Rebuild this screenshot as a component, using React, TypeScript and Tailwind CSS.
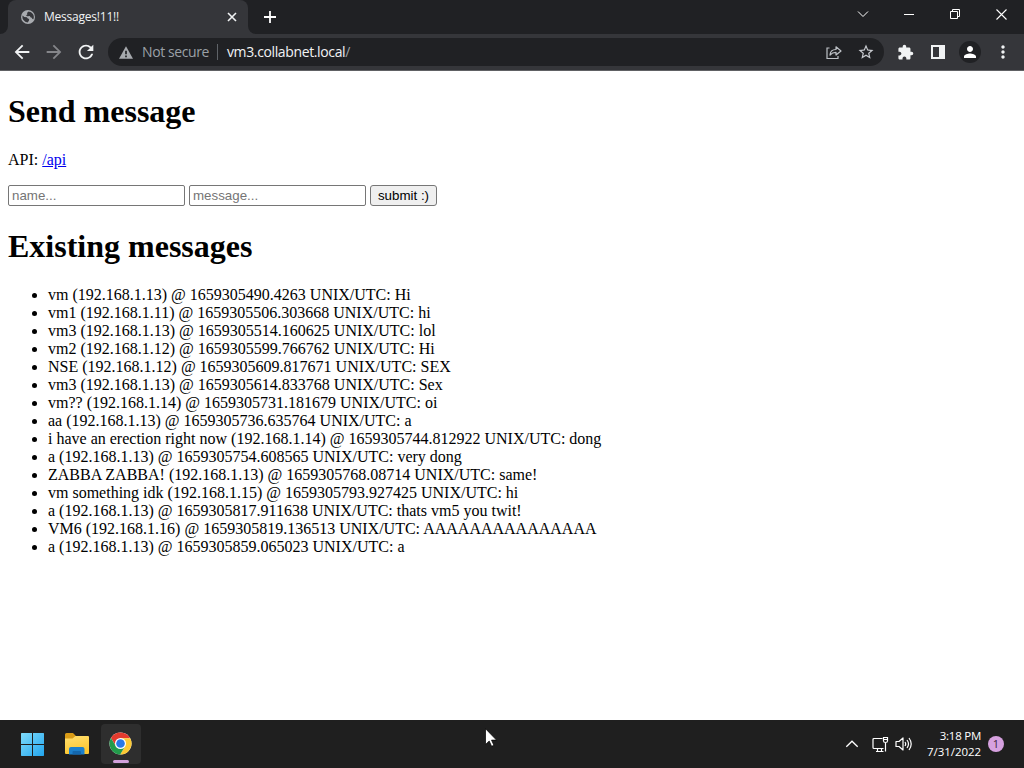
import React from "react";
import {
  MdArrowBack,
  MdArrowForward,
  MdExtension,
  MdMoreVert,
  MdPerson,
  MdRefresh,
  MdStarBorder,
} from "react-icons/md";

const messages = [
  "vm (192.168.1.13) @ 1659305490.4263 UNIX/UTC: Hi",
  "vm1 (192.168.1.11) @ 1659305506.303668 UNIX/UTC: hi",
  "vm3 (192.168.1.13) @ 1659305514.160625 UNIX/UTC: lol",
  "vm2 (192.168.1.12) @ 1659305599.766762 UNIX/UTC: Hi",
  "NSE (192.168.1.12) @ 1659305609.817671 UNIX/UTC: SEX",
  "vm3 (192.168.1.13) @ 1659305614.833768 UNIX/UTC: Sex",
  "vm?? (192.168.1.14) @ 1659305731.181679 UNIX/UTC: oi",
  "aa (192.168.1.13) @ 1659305736.635764 UNIX/UTC: a",
  "i have an erection right now (192.168.1.14) @ 1659305744.812922 UNIX/UTC: dong",
  "a (192.168.1.13) @ 1659305754.608565 UNIX/UTC: very dong",
  "ZABBA ZABBA! (192.168.1.13) @ 1659305768.08714 UNIX/UTC: same!",
  "vm something idk (192.168.1.15) @ 1659305793.927425 UNIX/UTC: hi",
  "a (192.168.1.13) @ 1659305817.911638 UNIX/UTC: thats vm5 you twit!",
  "VM6 (192.168.1.16) @ 1659305819.136513 UNIX/UTC: AAAAAAAAAAAAAAA",
  "a (192.168.1.13) @ 1659305859.065023 UNIX/UTC: a",
];

function GlobeIcon() {
  return (
    <svg width="14" height="14" viewBox="0 0 14 14">
      <circle cx="7" cy="7" r="7" fill="#a8abaf" />
      <path d="M1.600 5.400 3.300 7l2.500.3 1 1.300 1.400.5-.3 1.600-1.300 1.700A5.600 5.600 0 0 1 1.600 5.400Z" fill="#35363a" />
      <path d="M7.500 1.500 6 3l.4 1.200L5 5.400l1.300.9 2.400-.2 1.100 1.500 1 .2.600 1.300 1 .1A5.600 5.600 0 0 0 7.500 1.500Z" fill="#35363a" />
    </svg>
  );
}

function TabStrip() {
  return (
    <div className="flex h-[34px] bg-[#202124]">
      <div className="flex w-2 items-end bg-[#35363a]">
        <div className="h-full w-2 rounded-br-lg bg-[#202124]" />
      </div>
      <div className="flex w-60 items-center rounded-t-lg bg-[#35363a] pl-[13px] pr-[11px]">
        <GlobeIcon />
        <span className="ml-[9px] flex-1 whitespace-nowrap text-[12px] leading-4 tracking-[-0.22px] text-[#f1f3f4]">
          Messages!11!!
        </span>
        <svg width="10" height="10" viewBox="0 0 10 10" stroke="#f1f3f4" strokeWidth="1.6">
          <path d="m1 1 8 8M9 1 1 9" />
        </svg>
      </div>
      <div className="w-2 bg-[#35363a]">
        <div className="h-full rounded-bl-lg bg-[#202124]" />
      </div>
      <div className="flex flex-1 items-center pl-2">
        <svg width="12" height="12" viewBox="0 0 12 12" stroke="#fff" strokeWidth="1.8">
          <path d="M6 0v12M0 6h12" />
        </svg>
      </div>
      <div className="flex h-7 text-white">
        <div className="flex w-[46px] items-center justify-center">
          <svg width="12" height="8" viewBox="0 0 12 8" fill="none" stroke="currentColor" strokeWidth="1">
            <path d="m1 1.500 5 5 5-5" />
          </svg>
        </div>
        <div className="flex w-[46px] items-center justify-center">
          <div className="mt-px h-px w-2.5 bg-white" />
        </div>
        <div className="flex w-[46px] items-center justify-center">
          <svg width="10" height="10" viewBox="0 0 10 10" fill="none" stroke="currentColor">
            <path d="M.5 2.500h7v7h-7zM2.500 2.500v-2h7v7h-2" />
          </svg>
        </div>
        <div className="flex w-[46px] items-center justify-center">
          <svg width="11" height="11" viewBox="0 0 11 11" stroke="currentColor" strokeWidth="1.100">
            <path d="m.5.5 10 10M10.500.5l-10 10" />
          </svg>
        </div>
      </div>
    </div>
  );
}

function Toolbar() {
  return (
    <div className="flex h-9 items-center bg-[#35363a] pl-1.5 text-[#f1f3f4]">
      <div className="flex w-8 justify-center">
        <MdArrowBack size={22} />
      </div>
      <div className="flex w-8 justify-center text-[#85868a]">
        <MdArrowForward size={22} />
      </div>
      <div className="flex w-8 justify-center">
        <MdRefresh size={22} />
      </div>
      <div className="ml-1.5 flex h-7 w-[776px] items-center rounded-full bg-[#202124] pl-[11px] text-[14px]">
        <svg width="14" height="13" viewBox="0 0 14 13">
          <path d="M7 .3 14 12.700H0z" fill="#a6a9ad" />
          <path d="M7 4.700v3.600M7 9.500v1.800" stroke="#202124" strokeWidth="1.700" />
        </svg>
        <span className="mb-0.5 ml-[9px] w-[68px] whitespace-nowrap tracking-[-0.4px] text-[#9aa0a6]">Not secure</span>
        <span className="ml-[7px] h-4 w-px bg-[#5f6368]" />
        <span className="mb-0.5 ml-[9px] flex-1 whitespace-nowrap tracking-[-0.37px] text-[#f1f3f4]">
          vm3.collabnet.local<span className="text-[#9aa0a6]">/</span>
        </span>
        <svg width="16" height="16" viewBox="0 0 16 16" fill="none" stroke="#bdc1c6" strokeWidth="1.200">
          <path d="M3.500 4H1v10.500h11V12" />
          <path d="M4 11c.2-3.600 2.200-5.400 6-5.500V2.800L15 7l-5 4V8.400C7.500 8.400 5.600 9.200 4 11Z" strokeLinejoin="round" />
        </svg>
        <MdStarBorder size={18} className="ml-[15px] mr-[9px] text-[#c8cbd0]" />
      </div>
      <div className="ml-[5px] mr-px flex w-8 justify-center">
        <MdExtension size={17} />
      </div>
      <div className="flex w-8 justify-center">
        <svg width="14" height="14" viewBox="0 0 14 14">
          <path fill="currentColor" fillRule="evenodd" d="M0 0h14v14H0zM2 2v10h6V2z" />
        </svg>
      </div>
      <div className="flex w-8 justify-center">
        <div className="flex h-[22px] w-[22px] items-center justify-center rounded-full bg-[#202124] text-white">
          <MdPerson size={18} />
        </div>
      </div>
      <div className="flex w-[33px] justify-center">
        <MdMoreVert size={20} />
      </div>
    </div>
  );
}

function Page() {
  return (
    <main className="flex-1 overflow-hidden border-t border-[#606164] bg-white px-2 font-['Liberation_Serif',serif] text-[16px] leading-[18px] text-black">
      <h1 className="mt-[22px] text-[32px] font-bold leading-[37px]">Send message</h1>
      <p className="mt-[21px]">
        API:{" "}
        <a href="#api" className="text-[#0000ee] underline">
          /api
        </a>
      </p>
      <form className="mt-4 flex gap-1 font-['Liberation_Sans',sans-serif] text-[13.333px] leading-[15px]">
        <input
          placeholder="name..."
          className="h-[21px] w-[177px] rounded-[2px] border border-[#767676] px-[3px] placeholder:text-[#757575]"
        />
        <input
          placeholder="message..."
          className="h-[21px] w-[177px] rounded-[2px] border border-[#767676] px-[3px] placeholder:text-[#757575]"
        />
        <button type="button" className="h-[21px] w-[67px] rounded-[3px] border border-[#767676] bg-[#efefef] text-center">
          submit :)
        </button>
      </form>
      <h1 className="mt-[22px] text-[32px] font-bold leading-[37px]">Existing messages</h1>
      <ul className="mt-[21px] list-disc pl-10">
        {messages.map((m) => (
          <li key={m}>{m}</li>
        ))}
      </ul>
    </main>
  );
}

function WindowsIcon() {
  return (
    <svg width="24" height="24" viewBox="0 0 24 24">
      <defs>
        <linearGradient id="win" x1="0" y1="0" x2="1" y2="1">
          <stop offset="0" stopColor="#7fdcfb" />
          <stop offset="1" stopColor="#22a5ee" />
        </linearGradient>
      </defs>
      <path fill="url(#win)" d="M1.500 1H12v11H1V1.500zM13 1h10.500l.5.5V12H13zM1 13h11v11H1.500l-.5-.5zM13 13h11v10.500l-.5.5H13z" />
    </svg>
  );
}

function FolderIcon() {
  return (
    <svg width="24" height="22" viewBox="0 0 24 22">
      <defs>
        <linearGradient id="fold" x1="0" y1="0" x2="0.300" y2="1">
          <stop offset="0" stopColor="#ffdf70" />
          <stop offset="1" stopColor="#fdc72f" />
        </linearGradient>
      </defs>
      <path d="M0 1.500Q0 0 1.500 0H8l3 3h11v6H0z" fill="#d99b16" />
      <path d="M0 5.500h7.500L10.500 3H23q1 0 1 1v16q0 1-1 1H1q-1 0-1-1z" fill="url(#fold)" />
      <path d="M4 21.500V16q0-2 2-2h11.500q2 0 2 2v5.500z" fill="#1c80cc" />
      <path d="M7.500 21.500V19q0-1 1-1H15q1 0 1 1v2.500z" fill="#1467ad" />
    </svg>
  );
}

function ChromeIcon() {
  return (
    <svg width="23" height="23" viewBox="0 0 48 48">
      <circle cx="24" cy="24" r="23" fill="#fff" />
      <path d="M24 13h20.200A23 23 0 0 0 4.100 12.500l10.400 17z" fill="#e33b2e" />
      <path d="M33.500 29.500 23.400 47A23 23 0 0 0 44.200 13H24z" fill="#fcc934" />
      <path d="M14.500 29.500 4.100 12.500A23 23 0 0 0 23.400 47l10.100-17.500z" fill="#229b4b" />
      <circle cx="24" cy="24" r="11.500" fill="#fff" />
      <circle cx="24" cy="24" r="9" fill="#2878e6" />
    </svg>
  );
}

function Taskbar() {
  return (
    <footer className="flex h-12 items-center bg-[#1f1f1f] pl-5 text-white">
      <WindowsIcon />
      <div className="ml-[21px]">
        <FolderIcon />
      </div>
      <div className="ml-3 flex h-10 w-10 flex-col items-center rounded bg-[#2e2e2e] pt-2 pr-px">
        <ChromeIcon />
        <div className="mt-[5px] h-[3px] w-4 rounded-full bg-[#d3a1dc]" />
      </div>
      <div className="flex-1" />
      <svg width="14" height="8" viewBox="0 0 14 8" fill="none" stroke="currentColor" strokeWidth="1.300">
        <path d="m1.300 6.800 5.700-5.600 5.700 5.600" />
      </svg>
      <svg className="ml-[13px]" width="17" height="17" viewBox="0 0 17 17" fill="none" stroke="currentColor" strokeWidth="1.200">
        <path d="M10.500 2.500H2q-1 0-1 1v8q0 1 1 1h9.500M4 15.500h7.500M5.500 12.500v3M9.500 12.500v3" />
        <path d="M11.500 1.500h4V5q0 1.500-2 1.500t-2-1.500zM13.500 6.500v9M11.500 3.500h4" />
      </svg>
      <svg className="ml-[6px]" width="17" height="16" viewBox="0 0 17 16" fill="none" stroke="currentColor" strokeWidth="1.200">
        <path d="M1 5.500h3l4-3.500v12l-4-3.500H1z" strokeLinejoin="round" />
        <path d="M10 6q1.400 2 0 4M12 4q3 4 0 8M14 2q4.400 6 0 12" />
      </svg>
      <div className="ml-2 w-[61px] whitespace-nowrap text-right text-[11.500px] leading-4">
        <div className="tracking-[-0.25px]">3:18 PM</div>
        <div className="tracking-[-0.05px]">7/31/2022</div>
      </div>
      <div className="ml-[7px] mr-5 flex h-4 w-4 items-center justify-center rounded-full bg-[#d6a1df] text-[11px] leading-4 text-[#3b2540]">
        1
      </div>
    </footer>
  );
}

export default function App() {
  return (
    <div className="relative flex h-[768px] w-[1024px] flex-col overflow-hidden bg-white font-['Open_Sans','Noto_Sans',sans-serif]">
      <TabStrip />
      <Toolbar />
      <Page />
      <Taskbar />
      <svg className="absolute left-[485px] top-[728px]" width="12" height="19" viewBox="0 0 12 19">
        <path d="M.5.7v15.800l3.700-3.500 2.400 5.300 2.300-1-2.400-5.200h5z" fill="#fff" stroke="#000" strokeWidth=".7" />
      </svg>
    </div>
  );
}
